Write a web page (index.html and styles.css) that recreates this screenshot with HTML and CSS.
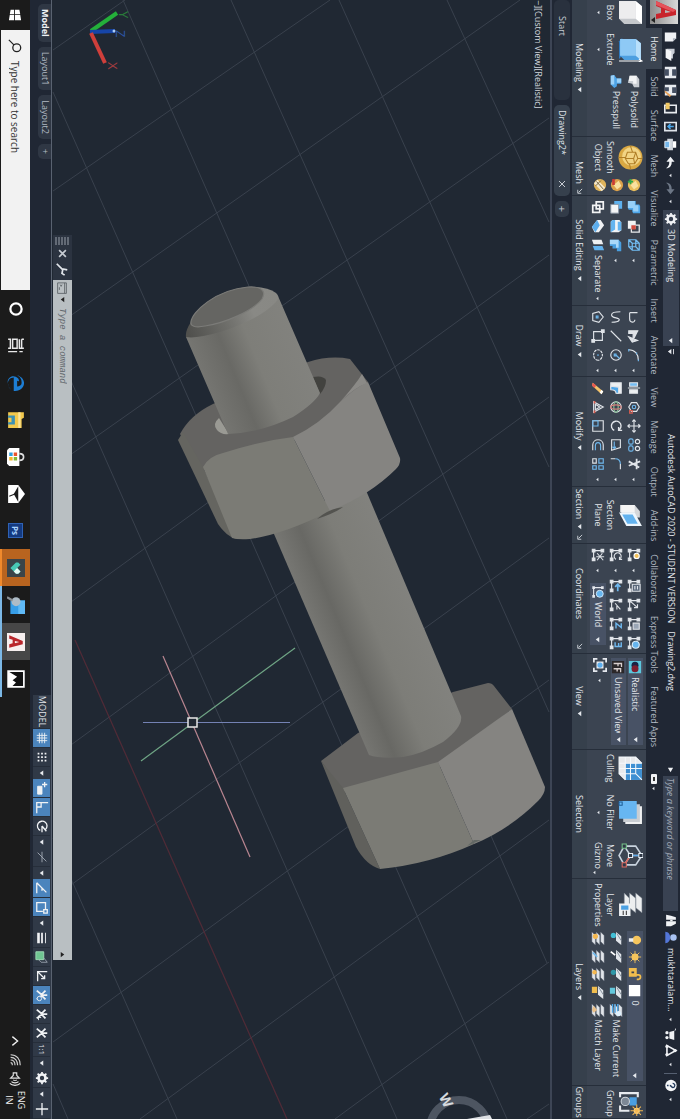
FILE: index.html
```html
<!DOCTYPE html>
<html lang="en">
<head>
    <meta charset="UTF-8">
    <meta name="viewport" content="width=device-width, initial-scale=1.0">
    <title>Autodesk AutoCAD 2020 - Drawing2.dwg</title>
    <link rel="stylesheet" href="styles.css">
</head>
<body>

<!-- shared symbols -->
<svg class="defs" aria-hidden="true">
    <symbol id="caret" viewBox="0 0 8 8"><path d="M1 2h6L4 6z" fill="#e6e9ee"/></symbol>
    <symbol id="dot" viewBox="0 0 8 8"><path d="M2 3h4L4 5.500z" fill="#e6e9ee"/></symbol>
    <symbol id="launch" viewBox="0 0 8 8"><path d="M1 1l4 4M6 2v4H2" stroke="#d5d9df" fill="none"/></symbol>
    <symbol id="ucs" viewBox="0 0 16 16"><path d="M3 3v10h10" stroke="#e6e9ee" stroke-width="1.300" fill="none"/><path d="M1.500 1.500h3v3h-3zM11.500 11.500h3v3h-3zM1.500 11.500h3v3h-3z" fill="#e6e9ee"/></symbol>
    <symbol id="stack" viewBox="0 0 16 16"><path d="M5 1h11l-4 4H1zM5 6h11l-4 4H1zM5 11h11l-4 4H1z" fill="#e1e5ea" stroke="#5b6572" stroke-width=".5"/></symbol>
    <symbol id="sheet" viewBox="0 0 16 16"><path d="M6 2h10l-5 6H1z" fill="#e1e5ea"/><path d="M3 7l8-5" stroke="#7c8794"/></symbol>
    <symbol id="gear" viewBox="0 0 16 16"><circle cx="8" cy="8" r="4" fill="none" stroke="#f0f2f5" stroke-width="3"/><path d="M8 1v3M8 12v3M1 8h3M12 8h3M3 3l2 2M11 11l2 2M13 3l-2 2M5 11l-2 2" stroke="#f0f2f5" stroke-width="2"/></symbol>
    <symbol id="person" viewBox="0 0 16 16"><path d="M8 8L3 14M8 8l5 6M8 9V2M8 9L3 4M8 9l5-5" stroke="#f0f2f5" stroke-width="2" fill="none"/></symbol>
</svg>

<div class="screen">
    <header class="header">
        <button class="app-button" aria-label="Application menu">
            <svg viewBox="0 0 24 28"><path d="M1 22L10 2h5l4 20h-5l-1-5H8l-2 5zM10 13h3l-1-6z" fill="#c8242c"/><path d="M1 22l9-20 2 3-7 17z" fill="#e5525a"/><path d="M17 23h6l-3 4z" fill="#222"/></svg>
        </button>
        <div class="titlebar">
            <div class="quick">
                <button aria-label="New"><svg viewBox="0 0 16 16"><path d="M3 1h7l4 4v10H3z" fill="#f0f2f5"/><path d="M10 1v4h4" fill="#aab1bb"/></svg></button>
                <button aria-label="Open"><svg viewBox="0 0 16 16"><path d="M1 13V3h5l2 2h5v2z" fill="#c9ced6"/><path d="M4 7h12l-4 7H1z" fill="#f4f5f7"/></svg></button>
                <button aria-label="Save"><svg viewBox="0 0 16 16"><path d="M1 1h14v14H1z" fill="#e8ebef"/><path d="M4 1h8v5H4zM4 10h8v5H4z" fill="#465063"/></svg></button>
                <button aria-label="Save as"><svg viewBox="0 0 16 16"><path d="M1 1h13v14H1z" fill="#e8ebef"/><path d="M4 1h7v5H4zM4 10h5v5H4z" fill="#465063"/><path d="M8 15l6-8 2 2-6 6z" fill="#e7a25a"/></svg></button>
                <button aria-label="Open from web"><svg viewBox="0 0 16 16"><path d="M4 1h9v14H4z" fill="none" stroke="#e8ebef" stroke-width="2"/><path d="M1 9h8v5H1z" fill="#f0c865"/></svg></button>
                <button aria-label="Save to web"><svg viewBox="0 0 16 16"><path d="M3 1h10v14H3z" fill="none" stroke="#dfe4ea" stroke-width="2"/><path d="M8 4v6M5 8l3 3 3-3" stroke="#4ba7ea" stroke-width="2" fill="none"/></svg></button>
                <button aria-label="Plot"><svg viewBox="0 0 16 16"><path d="M4 1h8v4H4z" fill="#fff"/><path d="M1 5h14v7H1z" fill="#cfd5dc"/><path d="M4 9h8v6H4z" fill="#74b6ea" stroke="#fff"/></svg></button>
                <button aria-label="Undo"><svg viewBox="0 0 16 16"><path d="M7 3L1 8l6 5V9.500c4 0 6 1 8 4 0-5-3-7-8-7z" fill="#f0f2f5"/></svg></button>
                <svg class="dot"><use href="#dot"/></svg>
                <button aria-label="Redo"><svg viewBox="0 0 16 16"><path d="M9 3l6 5-6 5V9.500c-4 0-6 1-8 4 0-5 3-7 8-7z" fill="#6c7685"/></svg></button>
                <svg class="dot"><use href="#dot"/></svg>
            </div>
            <div class="combo workspace">
                <svg><use href="#gear"/></svg>
                <select aria-label="Workspace"><option>3D Modeling</option></select>
                <svg class="caret"><use href="#caret"/></svg>
            </div>
            <svg class="caret more" viewBox="0 0 8 8"><path d="M1 0h6v1H1zM1 3h6L4 7z" fill="#e6e9ee"/></svg>
            <div class="title"><span>Autodesk AutoCAD 2020 - STUDENT VERSION</span><span>Drawing2.dwg</span></div>
            <svg class="caret" viewBox="0 0 8 8"><path d="M2 1l5 3-5 3z" fill="#f0f2f5"/></svg>
            <input class="search" type="text" aria-label="Search help" placeholder="Type a keyword or phrase">
            <div class="account">
                <svg viewBox="0 0 16 16"><path d="M2 8l2-6h3v12H1zM9 2h3l3 6v6H9z" fill="#f0f2f5"/><path d="M7 6h2v3H7z" fill="#f0f2f5"/></svg>
                <svg viewBox="0 0 16 16"><circle cx="8" cy="5" r="4" fill="#a9c2f2"/><path d="M1 15c0-8 14-8 14 0z" fill="#5376d8"/></svg>
                <button>mukhtaralam...</button>
                <svg class="dot"><use href="#dot"/></svg>
                <svg viewBox="0 0 16 16"><path d="M1 2h3l2 8h8l2-6H5" fill="#f0f2f5"/><circle cx="7" cy="13" r="2" fill="#f0f2f5"/><circle cx="13" cy="13" r="2" fill="#f0f2f5"/></svg>
                <svg viewBox="0 0 16 16"><path d="M8 2l6 11H2z" fill="none" stroke="#f0f2f5" stroke-width="2"/><circle cx="8" cy="3" r="2" fill="#f0f2f5"/><circle cx="3" cy="13" r="2" fill="#f0f2f5"/><circle cx="13" cy="13" r="2" fill="#f0f2f5"/></svg>
                <svg class="dot"><use href="#dot"/></svg>
                <i class="rule"></i>
                <svg viewBox="0 0 16 16"><circle cx="8" cy="8" r="7" fill="#f4f6f8"/><path d="M5.500 6c0-4 5-3 5-.5 0 2-2.500 2-2.500 4M8 11v2" stroke="#233a5c" stroke-width="1.600" fill="none"/></svg>
                <svg class="dot"><use href="#dot"/></svg>
            </div>
        </div>
        <nav class="tabs">
            <a href="#" class="active">Home</a><a href="#">Solid</a><a href="#">Surface</a><a href="#">Mesh</a><a href="#">Visualize</a><a href="#">Parametric</a><a href="#">Insert</a><a href="#">Annotate</a><a href="#">View</a><a href="#">Manage</a><a href="#">Output</a><a href="#">Add-ins</a><a href="#">Collaborate</a><a href="#">Express Tools</a><a href="#">Featured Apps</a>
            <button aria-label="Minimize ribbon"><svg viewBox="0 0 12 8"><rect x="1" y="1" width="10" height="6" rx="1" fill="#f0f2f5"/><path d="M4 4h4" stroke="#333" stroke-width="2"/></svg></button>
            <svg class="dot"><use href="#dot"/></svg>
        </nav>
    </header>

    <section class="ribbon">
        <div class="panel">
            <div class="tools modeling">
                <button class="big box"><svg viewBox="0 0 24 24"><path d="M1 7l5-6h17v17l-5 5H1z" fill="#c5c8cc"/><path d="M1 7h17v16H1z" fill="#ededee"/><path d="M1 7l5-6h17l-5 6z" fill="#fff"/></svg>Box<svg class="dot"><use href="#dot"/></svg></button>
                <button class="big"><svg viewBox="0 0 24 24"><path d="M1 20l3 3h17l-3-3z" fill="#2f7dc4"/><path d="M2 7l4-5h16v16l-4 4H2z" fill="#4d9fe0"/><path d="M2 7h16v15H2z" fill="#8ec9f5"/><path d="M2 7l4-5h16l-4 5z" fill="#b9e0fb"/><path d="M23 23V2M21 4l2-3 1 3" stroke="#fff" fill="none"/></svg>Extrude<svg class="dot"><use href="#dot"/></svg></button>
                <div class="list">
                    <button><svg viewBox="0 0 16 16"><path d="M2 5l4-3h9v6l-4 2-1 5-8-2z" fill="#c9cdd2"/><path d="M2 5h9v4H8v5l-6-1z" fill="#f3f4f5"/></svg>Polysolid</button>
                    <button><svg viewBox="0 0 16 16"><path d="M5 2h6v5h3l2 3-4 4H2l-1-4 4-3z" fill="#4da3e6"/><path d="M5 2h5v5H5zM1 10h11v4H2z" fill="#9bd1f8"/></svg>Presspull</button>
                </div>
            </div>
            <h2>Modeling <svg class="caret"><use href="#caret"/></svg></h2>
        </div>

        <div class="panel">
            <div class="tools">
                <button class="big"><svg viewBox="0 0 24 24"><circle cx="12" cy="12" r="11.500" fill="#d9a843"/><circle cx="11" cy="11" r="9" fill="#f2d484"/><path d="M7 7l6-2 5 3v6l-5 3-6-2zM7 7l6 2 5-1M13 9v8M1 12l6-2M13 5V1M18 13l5-1M12 17v6" stroke="#b07e26" fill="none"/></svg><span>Smooth<br>Object</span></button>
                <div class="list">
                    <button aria-label="Smooth more"><svg viewBox="0 0 16 16"><circle cx="8" cy="8" r="7" fill="#e8bd5c"/><path d="M3 6l6-3 4 5-5 4z" fill="#f8e1a0"/><path d="M4 9v6M1 12h6" stroke="#2da84c" stroke-width="2"/></svg></button>
                    <button aria-label="Smooth less"><svg viewBox="0 0 16 16"><circle cx="8" cy="8" r="7" fill="#dca14a"/><path d="M3 6l6-3 4 5-5 4z" fill="#f8e1a0"/><path d="M1 12h7" stroke="#cc3a35" stroke-width="3"/></svg></button>
                    <button aria-label="Refine mesh"><svg viewBox="0 0 16 16"><circle cx="8" cy="8" r="7" fill="#dfb45b"/><path d="M2 11l9-9 4 4-9 9z" fill="#f5e9cd"/><path d="M4 12l9-8M3 7l6 6" stroke="#6b5a34"/></svg></button>
                </div>
            </div>
            <h2 class="wide">Mesh <svg class="caret"><use href="#launch"/></svg></h2>
        </div>

        <div class="panel">
            <div class="tools solid">
                <div class="row">
                    <button aria-label="Union"><svg viewBox="0 0 16 16"><path d="M1 6h4V2l2-1h8v8l-2 1h-2v4l-2 1H1z" fill="#4ea7ea"/><path d="M1 7h5V3h7v6h-4v6H1z" fill="#97d0f8"/></svg></button>
                    <button aria-label="Subtract"><svg viewBox="0 0 16 16"><path d="M2 6h9v9H2z" fill="#f2f3f4"/><path d="M7 2h8v9H7z" fill="none" stroke="#e8eaed" stroke-width="1.500"/><path d="M7 6h5v5H7z" fill="#d34b3f"/></svg></button>
                    <button aria-label="Interfere"><svg viewBox="0 0 16 16"><path d="M2 6l4-4h8v8l-4 4H2zM2 6h8v8M10 6l4-4M6 2v8h8M6 10l-4 4" fill="none" stroke="#72bdf3" stroke-width="1.400"/></svg></button>
                    <svg class="dot"><use href="#dot"/></svg>
                </div>
                <div class="row">
                    <button aria-label="Intersect"><svg viewBox="0 0 16 16"><path d="M1 1h9v9H1z" fill="#5db1ef"/><path d="M5 5h10v9H5z" fill="#f5f6f7" stroke="#8793a3"/></svg></button>
                    <button aria-label="Slice"><svg viewBox="0 0 16 16"><path d="M1 4l3-2h9l2 3v9H3l-2-2z" fill="#f2f4f6"/><path d="M1 9h11l3 5H3l-2-2zM3 2h10v4H3z" fill="#64b4f0"/></svg></button>
                    <button aria-label="Thicken"><svg viewBox="0 0 16 16"><path d="M2 15V5l3-3h10v5h-3v5H9v3z" fill="#499fe0"/><path d="M2 5h9v3H7v7H2z" fill="#a9d9fa"/></svg></button>
                    <svg class="dot"><use href="#dot"/></svg>
                </div>
                <div class="row">
                    <button aria-label="Extract edges"><svg viewBox="0 0 16 16"><path d="M2 2h8v8H2zM6 6h8v8H6z" fill="none" stroke="#f2f3f4" stroke-width="2"/></svg></button>
                    <button aria-label="Offset face"><svg viewBox="0 0 16 16"><path d="M1 5l6-4 8 6v5l-6 3-8-6z" fill="#f0f2f4"/><path d="M1 9l6-3 8 5-6 4z" fill="#5cadec"/></svg></button>
                    <button><svg viewBox="0 0 16 16"><path d="M2 4l5-2v11l-5 2z" fill="#eef0f2"/><path d="M9 3l5-2v11l-5 2z" fill="#63b3ef"/></svg>Separate<svg class="dot"><use href="#dot"/></svg></button>
                </div>
            </div>
            <h2>Solid Editing <svg class="caret"><use href="#caret"/></svg></h2>
        </div>

        <div class="panel">
            <div class="tools line-icons">
                <div class="row">
                    <button aria-label="Polyline"><svg viewBox="0 0 16 16"><path d="M3 13V4M3 13h7c5 0 5-6 1-6"/></svg></button>
                    <button aria-label="Planar surface"><svg viewBox="0 0 16 16"><path d="M2 3v11h3V9h9M9 14l4-10 2 6z" fill="#dfe3e8"/></svg></button>
                    <button aria-label="Arc"><svg viewBox="0 0 16 16"><path d="M2 14C2 7 7 3 14 3"/><path class="hot" d="M1 14h3M13 3h2M5 5h2"/></svg></button>
                    <svg class="dot"><use href="#dot"/></svg>
                </div>
                <div class="row">
                    <button aria-label="Spline"><svg viewBox="0 0 16 16"><path d="M2 3c0 14 6 11 7 5s5-5 5 5"/></svg></button>
                    <button aria-label="Line"><svg viewBox="0 0 16 16"><path d="M2 14L14 2"/></svg></button>
                    <button aria-label="Circle"><svg viewBox="0 0 16 16"><circle cx="8" cy="8" r="6"/><path class="hot" d="M8 8l4-4M7 8h2v2H7z"/></svg></button>
                    <svg class="dot"><use href="#dot"/></svg>
                </div>
                <div class="row">
                    <button aria-label="Polygon"><svg viewBox="0 0 16 16"><path d="M8 2l6 5-2 7H4L2 7z"/><path class="hot" d="M7 8h2v2H7z"/></svg></button>
                    <button aria-label="Rectangle"><svg viewBox="0 0 16 16"><path d="M3 3h10v10H3z"/><path d="M1 1h3v3H1zM12 12h3v3h-3z" fill="#dfe3e8"/></svg></button>
                    <button aria-label="Ellipse"><svg viewBox="0 0 16 16"><ellipse cx="8" cy="8" rx="6" ry="5" stroke-dasharray="3 1"/><path class="hot" d="M7 8h2"/></svg></button>
                    <svg class="dot"><use href="#dot"/></svg>
                </div>
            </div>
            <h2>Draw <svg class="caret"><use href="#caret"/></svg></h2>
        </div>

        <div class="panel">
            <div class="tools line-icons modify">
                <div class="row">
                    <button aria-label="3D align"><svg viewBox="0 0 16 16"><path d="M2 4h4v9H2z" fill="#74bdf3"/><path d="M10 4h4v9h-4z" fill="#eef0f2"/><path d="M8 1v14"/></svg></button>
                    <button aria-label="3D move"><svg viewBox="0 0 16 16"><path d="M8 2l5 3v6l-5 3-5-3V5z"/><circle class="hot" cx="8" cy="8" r="2"/><path d="M12 10h3v3h-3z" stroke="#d65d50"/></svg></button>
                    <button aria-label="Move"><svg viewBox="0 0 16 16"><path d="M8 1v14M1 8h14M6 3l2-2 2 2M6 13l2 2 2-2M3 6L1 8l2 2M13 6l2 2-2 2"/></svg></button>
                    <button aria-label="Copy"><svg viewBox="0 0 16 16"><circle cx="4" cy="4" r="2.500"/><circle cx="12" cy="4" r="2.500"/><rect class="hot" x="1" y="9" width="6" height="5" rx="2"/><rect class="hot" x="9" y="9" width="6" height="5" rx="2"/></svg></button>
                    <button aria-label="Trim"><svg viewBox="0 0 16 16"><path d="M2 5h12M5 1l5 13M12 2L5 14" stroke-width="2"/></svg></button>
                    <svg class="dot"><use href="#dot"/></svg>
                </div>
                <div class="row">
                    <button aria-label="Fillet edge"><svg viewBox="0 0 16 16"><path d="M2 2h12v5c-5 0-6 3-6 7H2z" fill="#eef0f2"/><path d="M7 5h7v3c-3 0-4 2-4 6H6z" fill="#4fa6e8"/></svg></button>
                    <button aria-label="3D rotate"><svg viewBox="0 0 16 16"><circle cx="8" cy="8" r="6"/><ellipse cx="8" cy="8" rx="6" ry="2.500" stroke="#8ac59b"/><ellipse cx="8" cy="8" rx="2.500" ry="6" stroke="#d5817c"/></svg></button>
                    <button aria-label="Rotate"><svg viewBox="0 0 16 16"><path d="M13 10a5.500 5.500 0 1 1-1-6M13 1v4H9" stroke-width="1.600"/></svg></button>
                    <button aria-label="Stretch"><svg viewBox="0 0 16 16"><path d="M2 3h9l3 10H2z"/><path class="hot" d="M4 10h8M10 8l2 2-2 2"/></svg></button>
                    <button aria-label="Fillet"><svg viewBox="0 0 16 16"><path d="M2 14V9"/><path class="hot" d="M2 9c0-4 2-6 6-6"/><path d="M8 3h6"/></svg></button>
                    <svg class="dot"><use href="#dot"/></svg>
                </div>
                <div class="row">
                    <button aria-label="Erase"><svg viewBox="0 0 16 16"><path d="M2 14L12 2l3 2L5 15z" fill="#f4c36a" stroke="none"/><path d="M2 14l3-4 3 2-3 3z" fill="#e8584f" stroke="none"/><path d="M12 2l3 2-2 2-3-2z" fill="#fff" stroke="none"/></svg></button>
                    <button aria-label="3D scale"><svg viewBox="0 0 16 16"><path d="M8 2l6 11H2zM8 6l3 5H5z"/><path d="M1 12h3M12 12h3" stroke="#d65d50" stroke-width="2"/></svg></button>
                    <button aria-label="Scale"><svg viewBox="0 0 16 16"><path d="M2 2h12v12H2z"/><path class="hot" d="M2 8h6v6H2z"/></svg></button>
                    <button aria-label="Offset"><svg viewBox="0 0 16 16"><path d="M14 14H8C0 14 0 2 8 2h6"/><path class="hot" d="M14 11H9c-5 0-5-6 0-6h5"/></svg></button>
                    <button aria-label="Array"><svg viewBox="0 0 16 16"><path class="hot" d="M2 2h5v5H2zM10 2h4v5h-4zM10 10h4v4h-4z"/><path d="M2 10h5v4H2z"/></svg></button>
                    <svg class="dot"><use href="#dot"/></svg>
                </div>
            </div>
            <h2>Modify <svg class="caret"><use href="#caret"/></svg></h2>
        </div>

        <div class="panel">
            <div class="tools center">
                <button class="big"><svg viewBox="0 0 24 24"><path d="M2 8l6-5h6v13l-6 6H2z" fill="#d4d7da"/><path d="M2 8h7v13H2z" fill="#f5f5f5"/><path d="M9 8l13-7v15L9 23z" fill="#eef6fc"/><path d="M11 10l9-5v10l-9 5z" fill="#63b2ee"/></svg><span>Section<br>Plane</span></button>
            </div>
            <h2>Section <svg class="caret"><use href="#caret"/></svg><svg class="caret"><use href="#launch"/></svg></h2>
        </div>

        <div class="panel">
            <div class="tools line-icons">
                <div class="row coord">
                    <button aria-label="UCS"><svg viewBox="0 0 16 16"><use href="#ucs"/><circle cx="9" cy="5" r="3" fill="#f3c25b" stroke="#fff"/></svg></button><svg class="dot"><use href="#dot"/></svg>
                    <button aria-label="UCS named"><svg viewBox="0 0 16 16"><use href="#ucs"/><path d="M6 1h8v9H6zM8 4h4M8 7h4" fill="#59677a"/></svg></button>
                    <button aria-label="UCS origin"><svg viewBox="0 0 16 16"><use href="#ucs"/><path d="M3 13l8-9M7 4h4v4"/></svg></button>
                    <button aria-label="UCS face"><svg viewBox="0 0 16 16"><use href="#ucs"/><path d="M7 2h7v7H7z" fill="#9aa6b5"/></svg></button>
                    <button aria-label="UCS world"><svg viewBox="0 0 16 16"><use href="#ucs"/><circle cx="10" cy="6" r="4" fill="#66b5ef" stroke="#d8edfb"/></svg></button>
                </div>
                <div class="row coord">
                    <button aria-label="UCS previous"><svg viewBox="0 0 16 16"><use href="#ucs"/><path d="M13 8a4 4 0 1 1-1-5M13 1v3h-3"/></svg></button><svg class="dot"><use href="#dot"/></svg>
                    <button aria-label="UCS Z axis"><svg viewBox="0 0 16 16"><use href="#ucs"/><path class="hot" d="M14 6H6M9 3L6 6l3 3" stroke-width="2"/></svg></button>
                    <button aria-label="UCS 3 point"><svg viewBox="0 0 16 16"><use href="#ucs"/><path d="M6 9l7-6M9 7h4"/></svg></button>
                    <button aria-label="UCS Z"><svg viewBox="0 0 16 16"><use href="#ucs"/><path class="hot" d="M7 2h5L7 8h6" stroke-width="1.600"/></svg></button>
                    <button aria-label="UCS view"><svg viewBox="0 0 16 16"><use href="#ucs"/><path class="hot" d="M7 2h5v7H7M8 5h4" stroke-width="1.600"/></svg></button>
                </div>
                <div class="row coord">
                    <button aria-label="UCS icon"><svg viewBox="0 0 16 16"><use href="#ucs"/><path d="M6 3l8 6M14 2L6 9M10 1v9"/></svg></button><svg class="dot"><use href="#dot"/></svg>
                    <div class="combo">
                        <svg viewBox="0 0 16 16"><use href="#ucs"/><circle cx="10" cy="6" r="4" fill="#66b5ef" stroke="#d8edfb"/></svg>
                        <select aria-label="Coordinate system"><option>World</option></select>
                        <svg class="caret"><use href="#caret"/></svg>
                    </div>
                </div>
            </div>
            <h2 class="wide">Coordinates <svg class="caret"><use href="#launch"/></svg></h2>
        </div>

        <div class="panel">
            <div class="tools stacked">
                <div class="combo">
                    <svg viewBox="0 0 16 16"><path d="M1 1h14v14H1z" fill="#5cc7dd"/><circle cx="6" cy="8" r="4" fill="#1b2444"/><circle cx="10" cy="8" r="4" fill="#7c1f30"/></svg>
                    <select aria-label="Visual style"><option>Realistic</option></select>
                    <svg class="caret"><use href="#caret"/></svg>
                </div>
                <div class="combo">
                    <svg viewBox="0 0 16 16"><path d="M1 1h14v14H1z" fill="#2b2729"/><path d="M4 13V4h4M4 8h3M10 13V5h4M10 9h3" stroke="#d9cfcf" stroke-width="1.500" fill="none"/></svg>
                    <select aria-label="Saved view"><option>Unsaved View</option></select>
                    <svg class="caret"><use href="#caret"/></svg>
                </div>
                <div class="row">
                    <button aria-label="Viewport"><svg viewBox="0 0 16 16"><path d="M1 5V1h4M11 1h4v4M15 11v4h-4M5 15H1v-4" stroke="#e6e9ee" stroke-width="2" fill="none"/><path d="M4 4h8v8H4z" fill="#e6e9ee"/><circle cx="8" cy="8" r="3" fill="#5daeed"/></svg></button><svg class="dot"><use href="#dot"/></svg>
                </div>
            </div>
            <h2>View <svg class="caret"><use href="#caret"/></svg></h2>
        </div>

        <div class="panel">
            <div class="tools selection">
                <button class="big"><svg viewBox="0 0 24 24"><path d="M1 7l6-6h16v16l-6 6H1z" fill="#e8eaec"/><path d="M7 1h16v16H7z" fill="#3d8fd2"/><path d="M1 7h16v16H1zM1 7l6-6M17 7l6-6M17 23l6-6M7 1v22M12 1v22M1 12h22M1 17h22" stroke="#f4f8fb" fill="none"/></svg>Culling</button>
                <button class="big"><svg viewBox="0 0 24 24"><path d="M6 1h17v16H6z" fill="#f0f1f2"/><path d="M4 3h17v16H4z" fill="#c9cdd2"/><path d="M1 6h17v17H1z" fill="#67b6f2"/><path d="M2 20h3v3H2z" fill="none" stroke="#1e5d96"/></svg>No Filter<svg class="dot"><use href="#dot"/></svg></button>
                <button class="big"><svg viewBox="0 0 24 24"><path d="M12 1l9 6v11l-9 5-9-5V7zM12 12L3 18M12 12l9 6M12 12V1" fill="none" stroke="#c9d3de" stroke-width="1.500"/><path d="M12 12l9 6" stroke="#dd6a60" stroke-width="1.500"/><path d="M12 12V1" stroke="#5da9ea" stroke-width="1.500"/><path d="M1 16h4v4H1z" fill="#2f3846" stroke="#76c48a"/><path d="M19 16h4v4h-4z" fill="#2f3846" stroke="#dd6a60"/><path d="M10 0h4v4h-4zM10 10h4v4h-4z" fill="#2f3846" stroke="#e8f0f7"/></svg><span>Move<br>Gizmo</span></button>
                <svg class="dot end"><use href="#dot"/></svg>
            </div>
            <h2>Selection</h2>
        </div>

        <div class="panel">
            <div class="tools layers">
                <button class="big"><svg viewBox="0 0 24 24"><path d="M6 1h14l-5 6H1zM6 7h14l-5 6H1zM6 13h14l-5 5H1z" fill="#eceeef" stroke="#77818d" stroke-width=".5"/><path d="M11 12h12v11H11z" fill="#eef1f4"/><path d="M13 14h4v7h-4z" fill="#4ba1e3"/><path d="M18 16h4M18 19h4" stroke="#333"/></svg><span>Layer<br>Properties</span></button>
                <div class="layer-tools">
                    <div class="combo">
                        <svg viewBox="0 0 16 16"><circle cx="8" cy="6" r="5" fill="#f6c55d"/><path d="M6 10h4v5H6z" fill="#e9ecf0"/></svg>
                        <svg viewBox="0 0 16 16"><circle cx="8" cy="8" r="4" fill="#f6c55d"/><path d="M8 1v14M1 8h14M3 3l10 10M13 3L3 13" stroke="#f6c55d"/></svg>
                        <svg viewBox="0 0 16 16"><path d="M1 6h10v9H1z" fill="#f1bd4e"/><path d="M5 9h2v3H5z" fill="#3a4250"/><path d="M9 7V4c0-3 5-3 5 0v2" stroke="#f1bd4e" stroke-width="2" fill="none"/></svg>
                        <svg viewBox="0 0 16 16"><path d="M1 2h13v13H1z" fill="#fff"/></svg>
                        <select aria-label="Layer"><option>0</option></select>
                        <svg class="caret"><use href="#caret"/></svg>
                    </div>
                    <div class="row">
                        <button aria-label="Layer off"><svg viewBox="0 0 16 16"><use href="#sheet"/><circle cx="5" cy="11" r="3" fill="#43bfd6"/></svg></button>
                        <button aria-label="Layer isolate"><svg viewBox="0 0 16 16"><use href="#sheet"/><path d="M3 14l4-5" stroke="#fff" stroke-width="2"/></svg></button>
                        <button aria-label="Layer freeze"><svg viewBox="0 0 16 16"><use href="#sheet"/><circle cx="6" cy="11" r="3" fill="#2f97a8"/></svg></button>
                        <button aria-label="Layer lock"><svg viewBox="0 0 16 16"><use href="#sheet"/><path d="M3 9h7v6H3z" fill="#64c8dd"/></svg></button>
                        <button><svg viewBox="0 0 16 16"><use href="#stack"/><path d="M1 6h10M1 9h10M1 12h10" stroke="#4fa9ea" stroke-width="1.500"/><circle cx="12" cy="5" r="3" fill="#dff0fc"/></svg>Make Current</button>
                    </div>
                    <div class="row">
                        <button aria-label="All layers on"><svg viewBox="0 0 16 16"><use href="#stack"/><circle cx="6" cy="11" r="3" fill="#f4b851"/></svg></button>
                        <button aria-label="Unisolate"><svg viewBox="0 0 16 16"><use href="#stack"/><path d="M4 14l5-5" stroke="#6fb9ed" stroke-width="2"/></svg></button>
                        <button aria-label="Thaw all layers"><svg viewBox="0 0 16 16"><use href="#stack"/><circle cx="6" cy="12" r="2.500" fill="#f4b851"/></svg></button>
                        <button aria-label="Unlock layer"><svg viewBox="0 0 16 16"><use href="#sheet"/><path d="M2 9h7v6H2z" fill="#f1bd4e"/></svg></button>
                        <button><svg viewBox="0 0 16 16"><use href="#stack"/><path d="M3 13l5-4 3 4-3 2z" fill="#e9c08a"/></svg>Match Layer</button>
                    </div>
                </div>
            </div>
            <h2>Layers <svg class="caret"><use href="#caret"/></svg></h2>
        </div>

        <div class="panel">
            <div class="tools groups">
                <button class="big"><svg viewBox="0 0 24 24"><path d="M6 5H2v17h4M14 22h5v-9" fill="none" stroke="#e8ebef" stroke-width="2"/><path d="M6 6h8v7H6z" fill="#4b9fe2"/><circle cx="10" cy="17" r="4" fill="#7d8895" stroke="#cfd5dc"/><circle cx="19" cy="6" r="3" fill="#fbd98f"/><path d="M19 0v12M13 6h12M15 2l8 8M23 2l-8 8" stroke="#f4b851"/></svg>Group</button>
            </div>
            <h2>Groups</h2>
        </div>
    </section>

    <nav class="files">
        <a href="#">Start</a>
        <a href="#" class="current">Drawing2* <svg viewBox="0 0 8 8"><path d="M1 1l6 6M7 1L1 7" stroke="#c6cbd2" fill="none"/></svg></a>
        <button aria-label="New drawing">+</button>
    </nav>

    <main class="viewport">
        <svg class="model" viewBox="0 0 1119 498" preserveAspectRatio="xMinYMin slice">
            <defs>
                <linearGradient id="shaft" gradientUnits="userSpaceOnUse" x1="205" y1="385" x2="302" y2="345">
                    <stop offset="0" stop-color="#767672"/><stop offset=".3" stop-color="#696965"/><stop offset=".55" stop-color="#7e7e79"/><stop offset="1" stop-color="#82827e"/>
                </linearGradient>
                <linearGradient id="shaft2" gradientUnits="userSpaceOnUse" x1="318" y1="640" x2="414" y2="600">
                    <stop offset="0" stop-color="#777773"/><stop offset=".25" stop-color="#686864"/><stop offset=".55" stop-color="#7d7d78"/><stop offset="1" stop-color="#82827e"/>
                </linearGradient>
                <linearGradient id="rim" gradientUnits="userSpaceOnUse" x1="188" y1="333" x2="278" y2="296">
                    <stop offset="0" stop-color="#50504d"/><stop offset=".4" stop-color="#6e6e6a"/><stop offset=".7" stop-color="#898985"/><stop offset="1" stop-color="#888884"/>
                </linearGradient>
            </defs>
            <g transform="matrix(0 -1 1 0 0 550)">
                <g class="grid">
                    <path d="M53 92L507 1119M53 340L397 1119M123 0L547 963M231 0L549 712M339 0L549 467M447 0L549 222M53 838L177 1119M53 1084L68 1119"/>
                    <path d="M53 50L125 0M53 191L330 0M53 328L520 0M53 467L549 118M53 615L549 255M53 758L549 397M53 898L549 538M53 1042L549 680M140 1119L549 820M335 1119L549 962M527 1119L549 1104"/>
                </g>
                <path class="axis-line" d="M75 640L287 1119"/>

                <!-- bolt head -->
                <path fill="#646361" d="M321 761L358 733L453 692L488 683Q492 683 494 686L512 709L438 768L343 792z"/>
                <path fill="#60605c" d="M321 761L343 788L380 869Q366 865 356 847z"/>
                <path fill="#7b7b75" d="M343 788L438 762L474 844Q430 864 380 869z"/>
                <path fill="#858481" d="M438 762L512 709L545 787Q545 794 538 801Q510 829 474 844z"/>
                <path fill="#626865" d="M467 846L474 840L481 840z"/>
                <!-- shank -->
                <path fill="url(#shaft2)" d="M268 520L365 488L461 716Q463 727 443 742Q422 754 403 757Q380 759 369 755z"/>
                <!-- nut -->
                <path fill="#646361" d="M180 434Q190 415 213 404L308 362Q330 355 350 359L368 382L340 410L293 441L203 470z"/>
                <path fill="#656560" d="M178 440L183 432L203 467L236 539Q226 536 218 524z"/>
                <path fill="#7b7b75" d="M203 467Q209 456 223 453Q260 441 293 437L330 511Q285 534 250 539Q238 540 232 538z"/>
                <path fill="#858481" d="M293 437Q320 424 340 402Q356 387 368 382L400 458Q401 464 396 469Q370 495 330 511z"/>
                <path fill="#8b8a87" d="M340 402Q354 388 367 383L362 374Q356 384 340 402z"/>
                <path fill="#53534f" d="M317 519Q328 509 343 507Q335 513 317 519z"/>
                <path fill="#9a9a94" d="M219 418Q212 424 217 430Q221 435 229 434z"/>
                <path fill="#42423f" d="M313 377Q323 375 326 380Q326 387 320 394z"/>
                <!-- threaded end -->
                <path fill="url(#shaft)" d="M186 337Q240 325 278 296L320 393Q315 403 293 417Q260 433 228 434z"/>
                <path fill="url(#rim)" d="M186 337Q185 331 191 322L250 287Q268 287 276 293Q281 297 275 303Q258 320 220 332Q196 339 186 337z"/>
                <path fill="#656562" stroke="#7b7b78" stroke-width=".7" d="M191 322C192 312 215 290 248 287C263 286 266 292 262 299C253 311 225 323 205 326C195 328 190 326 191 322z"/>

                <!-- crosshair -->
                <path stroke="#b98691" d="M163 656L250 857"/>
                <path stroke="#6fa585" d="M295 648L141 761"/>
                <path stroke="#7482b4" d="M143 722.500H290"/>
                <rect x="188" y="718" width="9" height="9" fill="#202833" stroke="#e6e6e6" stroke-width="1.500"/>

                <!-- UCS icon -->
                <path stroke="#24b03a" stroke-width="4" d="M91 31L117 13"/>
                <path stroke="#1645a8" stroke-width="4" d="M90 32L115 31"/>
                <path stroke="#cf3f3b" stroke-width="4" d="M91 33L105 63"/>
                <circle cx="114" cy="31" r="1.500" fill="#a9cdf8"/>

                <!-- view cube -->
                <circle cx="459" cy="1129" r="29" fill="none" stroke="#4d5561" stroke-width="8"/>
                <path fill="#dde0e4" d="M467 1119L490 1115L492 1119z"/>
            </g>
            <text class="ucs-y" x="11" y="431">Y</text>
            <text class="ucs-z" x="30" y="434">Z</text>
            <text class="ucs-x" x="62" y="442">X</text>
            <text class="west" x="1101" y="105" text-anchor="middle" dominant-baseline="middle" transform="rotate(-28 1101 105)">W</text>
        </svg>
        <p class="view-label">&minus;][Custom View][Realistic]</p>
        <div class="command">
            <svg class="grip" viewBox="0 0 8 14"><path d="M1 0v14M3 0v14M5 0v14M7 0v14" stroke="#9ba2ab" stroke-dasharray="2 1"/></svg>
            <button aria-label="Close"><svg viewBox="0 0 8 8"><path d="M1 1l6 6M7 1L1 7" stroke="#c6cbd2" stroke-width="1.500"/></svg></button>
            <button aria-label="Customize"><svg viewBox="0 0 16 16"><path d="M2 14l7-7M9 2l-1 5 5 1 2-3" stroke="#e1e5ea" stroke-width="2" fill="none"/></svg></button>
            <div class="prompt">
                <svg viewBox="0 0 16 12"><path d="M1 1h12v10H1zM1 3h12M3 6l2 1-2 1M6 9h3" fill="none" stroke="#5c6267"/></svg>
                <svg class="caret dark" viewBox="0 0 8 8"><path d="M1 2h6L4 6z"/></svg>
                <input type="text" aria-label="Command" placeholder="Type a command">
                <svg class="caret dark" viewBox="0 0 8 8"><path d="M1 6h6L4 2z"/></svg>
            </div>
        </div>
    </main>

    <footer class="bottom">
        <nav class="layouts">
            <a href="#" class="current">Model</a><a href="#">Layout1</a><a href="#">Layout2</a><a href="#">+</a>
        </nav>
        <div class="status">
            <button class="text">MODEL</button>
            <button class="on" aria-label="Grid"><svg viewBox="0 0 16 16"><path d="M5 2v12M8 2v12M11 2v12M2 5h12M2 8h12M2 11h12"/></svg></button>
            <button aria-label="Snap"><svg viewBox="0 0 16 16"><path d="M3 4h11M3 8h11M3 12h11" stroke-width="2" stroke-dasharray="2 2"/></svg></button>
            <svg class="caret"><use href="#caret"/></svg>
            <button class="on" aria-label="Dynamic input"><svg viewBox="0 0 16 16"><path d="M4 2v6M1 5h6" stroke-width="1.500"/><path d="M6 8h9v5H6z" fill="#f0f2f5"/></svg></button>
            <button class="on" aria-label="Ortho"><svg viewBox="0 0 16 16"><path d="M3 1v13h12M3 9h5v5" stroke-width="1.500"/></svg></button>
            <button aria-label="Polar tracking"><svg viewBox="0 0 16 16"><path d="M12 4a5.500 5.500 0 1 0 1 6M8 8l6-5M8 8h7" stroke-width="1.500"/></svg></button>
            <svg class="caret"><use href="#caret"/></svg>
            <button aria-label="Isodraft"><svg viewBox="0 0 16 16"><path d="M2 8h12M3 13L13 3" stroke="#a5adb8"/></svg></button>
            <svg class="caret"><use href="#caret"/></svg>
            <button class="on" aria-label="Snap tracking"><svg viewBox="0 0 16 16"><path d="M2 14L13 3M2 14h12M8 8h3" stroke-width="1.500"/></svg></button>
            <button class="on" aria-label="Object snap"><svg viewBox="0 0 16 16"><path d="M11 4H3v10h10V7M11 2h4v4h-4z" stroke-width="1.500"/></svg></button>
            <svg class="caret"><use href="#caret"/></svg>
            <button aria-label="Lineweight"><svg viewBox="0 0 16 16"><path d="M2 4h12" /><path d="M2 8h12" stroke-width="2"/><path d="M2 12h12" stroke-width="3"/></svg></button>
            <button aria-label="Selection cycling"><svg viewBox="0 0 16 16"><path d="M2 6h9v9H2z" fill="#6fc592" stroke="#a2dfb9"/><path d="M9 6l5-4v7l-3 3" stroke="#9ca5b1"/></svg></button>
            <button aria-label="Dynamic UCS"><svg viewBox="0 0 16 16"><path d="M3 2v11h11M3 13l7-7M7 5h4v4" stroke-width="1.500"/></svg></button>
            <button class="on" aria-label="Annotation visibility"><svg viewBox="0 0 16 16"><use href="#person"/><circle cx="12" cy="11" r="2.500" fill="#4b84bd"/></svg></button>
            <button aria-label="Auto scale"><svg viewBox="0 0 16 16"><use href="#person"/><path d="M12 9v5M10 12h5"/></svg></button>
            <button aria-label="Annotation scale"><svg viewBox="0 0 16 16"><use href="#person"/></svg></button>
            <button class="scale">1:1</button>
            <svg class="caret"><use href="#caret"/></svg>
            <button aria-label="Workspace switching"><svg><use href="#gear"/></svg></button>
            <svg class="caret"><use href="#caret"/></svg>
            <button aria-label="Annotation monitor"><svg viewBox="0 0 16 16"><path d="M8 1v14M1 8h14" stroke-width="1.500"/></svg></button>
        </div>
    </footer>

    <div class="taskbar">
        <button class="start" aria-label="Start"><svg viewBox="0 0 16 16"><path d="M2 3l5-1v6H2zM8 2l6-1v7H8zM2 9h5v5l-5-1zM8 9h6v6l-6-1z" fill="#fff"/></svg></button>
        <label class="find">
            <svg viewBox="0 0 16 16"><circle cx="10" cy="6" r="4.500" fill="none" stroke="#222" stroke-width="1.500"/><path d="M7 9l-6 6" stroke="#222" stroke-width="1.500"/></svg>
            <input type="text" placeholder="Type here to search" aria-label="Search">
        </label>
        <div class="apps">
            <button aria-label="Cortana"><svg viewBox="0 0 16 16"><circle cx="8" cy="8" r="5" fill="none" stroke="#fff" stroke-width="2"/></svg></button>
            <button aria-label="Task view"><svg viewBox="0 0 16 16"><path d="M2 3V1M10 3V1M2 3h8v2H2M2 7h8v4H2zM2 15v-2h8v2M13 2v3M13 7v8" fill="none" stroke="#e9e9e9" stroke-width="1.300"/></svg></button>
            <button aria-label="Edge"><svg viewBox="0 0 16 16"><path d="M14 12c-3 5-11 4-11-2h12C16 0 4-3 1 7c2-4 5-4 7-4 2 0 3 2 3 4H6c1-2 0-2-2-1-5 5 0 11 5 9 2 0 4-1 5-3z" fill="#1d7ed4"/></svg></button>
            <button aria-label="Explorer"><svg viewBox="0 0 16 16"><path d="M1 1h5l1 2h8v12H1z" fill="#f2c84d"/><path d="M1 4h14v2H1z" fill="#fbe49a"/><path d="M4 15V9h8v6h-2v-3H6v3z" fill="#3a90b5"/></svg></button>
            <button aria-label="Store"><svg viewBox="0 0 16 16"><path d="M0 5h16v9l-2 2H2l-2-2z" fill="#fff"/><path d="M5 5c0-5 6-5 6 0" fill="none" stroke="#ddd" stroke-width="1.500"/><path d="M4 7h3v3H4z" fill="#e8542f"/><path d="M8 7h3v3H8z" fill="#83b735"/><path d="M4 11h3v3H4z" fill="#2b9fe0"/><path d="M8 11h3v3H8z" fill="#f2b52c"/></svg></button>
            <button aria-label="Mail"><svg viewBox="0 0 16 16"><path d="M0 6l8-6 8 6v9H0z" fill="#fff"/><path d="M1 6h14l-7 4z" fill="#1c1c1c"/><path d="M8 9l2 5" stroke="#1c1c1c"/></svg></button>
            <button class="ps">Ps</button>
            <button class="orange" aria-label="Filmora"><svg viewBox="0 0 16 16"><path d="M0 0h16v16H0z" fill="#3a4449"/><path d="M3 6l2-2 3 3 3-3 2 2v2l-5 5-5-5z" fill="#48c9b5"/><path d="M11 4l2 2v2l-2 2-3-3z" fill="#e3faf5"/></svg></button>
            <button class="open" aria-label="Magnifier"><svg viewBox="0 0 16 16"><path d="M4 0h12v13H4z" fill="#379ee8"/><path d="M4 0h12v6H4z" fill="#5fb9f5"/><circle cx="5" cy="8" r="4" fill="#aebcc7"/><path d="M4 11l-3 5" stroke="#8b8f93" stroke-width="2"/></svg></button>
            <button class="open focus" aria-label="AutoCAD"><svg viewBox="0 0 16 16"><path d="M0 0h16v16H0z" fill="#f7efee"/><path d="M2 14L7 2h3l3 12h-3l-1-3H6l-1 3zM7 9h2L8 5z" fill="#b9262b"/></svg></button>
            <button class="open" aria-label="Photos"><svg viewBox="0 0 16 16"><path d="M1 1h14v14H1z" fill="#111" stroke="#fff" stroke-width="1.500"/><path d="M1 15l5-8 3 4 2-3 4 4v3z" fill="#fff"/></svg></button>
        </div>
        <div class="tray">
            <svg viewBox="0 0 16 16"><path d="M3 11l5-6 5 6" stroke="#f2f2f2" stroke-width="1.500" fill="none"/></svg>
            <svg viewBox="0 0 16 16"><path d="M2 13C2 6 7 2 14 2M5 13c0-5 4-8 9-8M8 13c0-3 2-5 6-5M11 13c0-1 1-2 3-2" stroke="#cfcfcf" stroke-width="1.300" fill="none"/></svg>
            <svg viewBox="0 0 16 16"><path d="M1 6h3l3-3v10l-3-3H1z" fill="none" stroke="#e4e4e4" stroke-width="1.300"/><path d="M9 6c1 1 1 3 0 4M11 4c2 2 2 6 0 8M13 2c3 3 3 9 0 12" stroke="#e4e4e4" stroke-width="1.300" fill="none"/></svg>
            <span class="lang">ENG<br>IN</span>
        </div>
    </div>
</div>
</body>
</html>
```
FILE: styles.css
```css
* {
    box-sizing: border-box;
}
html {
    overflow: hidden;
}
body {
    position: relative;
    margin: 0;
    height: 100vh;
    overflow: hidden;
    background: #202833;
    font-family: "Open Sans", "Noto Sans", sans-serif;
    font-size: 9px;
    line-height: 12px;
    color: #e3e6eb;
}
.defs {
    position: absolute;
    width: 0;
    height: 0;
}

/* the desktop is laid out landscape and turned a quarter clockwise */
.screen {
    width: 100vh;
    height: 100vw;
    transform: translateX(100vw) rotate(90deg);
    transform-origin: 0 0;
    display: grid;
    grid-template-columns: minmax(0, 1fr);
    grid-template-rows: auto auto auto minmax(0, 1fr) auto auto;
    overflow: hidden;
}
button, input, select {
    font: inherit;
    color: inherit;
    background: none;
    border: 0;
    padding: 0;
    margin: 0;
    border-radius: 0;
    appearance: none;
    outline: 0;
    white-space: nowrap;
}
input {
    min-width: 0;
}
a {
    color: inherit;
    text-decoration: none;
    white-space: nowrap;
}
svg {
    display: block;
    flex: none;
    width: 14px;
    height: 14px;
}
svg.caret {
    width: 7px;
    height: 7px;
}
svg.dot {
    width: 7px;
    height: 7px;
}
svg.dark {
    fill: #222;
}

/* title bar and ribbon tabs */
.header {
    display: grid;
    grid-template-columns: 28px minmax(0, 1fr);
    grid-template-rows: 18px 16px;
    background: #202734;
}
.app-button {
    grid-row: 1 / 3;
    width: 24px;
    height: 28px;
    margin-top: 2px;
    background: linear-gradient(#d8d8d8, #8c8c8c);
}
.app-button svg {
    width: 24px;
    height: 28px;
}
.titlebar {
    display: flex;
    align-items: center;
    min-width: 0;
}
.quick {
    display: flex;
    align-items: center;
    gap: 5px;
    width: 182px;
    padding-left: 2px;
}
.quick svg {
    width: 13px;
    height: 13px;
}
.quick .dot {
    width: 7px;
    margin: 0 -2px;
}
.combo {
    display: flex;
    align-items: center;
    gap: 3px;
    height: 16px;
    padding: 0 2px;
    background: #485265;
}
.combo select {
    flex: 1;
    min-width: 0;
    height: 14px;
    line-height: 14px;
}
.workspace {
    width: 136px;
    background: #394252;
}
.more {
    margin-left: 2px;
}
.title {
    flex: 1;
    display: flex;
    justify-content: center;
    gap: 8px;
    padding-left: 4px;
    white-space: nowrap;
}
.search {
    width: 135px;
    height: 15px;
    margin: 0 3px 0 3px;
    padding: 0 2px;
    background: #394252;
    font-style: italic;
}
.search::placeholder {
    color: #a5adba;
}
.account {
    display: flex;
    align-items: center;
    gap: 4px;
    width: 205px;
}
.account > svg:not(.dot) {
    width: 13px;
}
.rule {
    width: 1px;
    height: 13px;
    margin: 0 1px;
    background: #566071;
}
.tabs {
    display: flex;
    align-items: center;
    color: #b2b9c3;
}
.tabs a {
    padding: 2px 6px 2px 7px;
}
.tabs .active {
    padding: 2px 8px;
    background: #3b4451;
    color: #e6e9ee;
}
.tabs button {
    margin-left: 20px;
}
.tabs button svg {
    width: 12px;
    height: 8px;
}

/* ribbon */
.ribbon {
    display: grid;
    grid-template-columns: 137fr 59fr 110fr 71fr 110fr 57fr 110fr 96fr 129fr 207fr 33fr;
    height: 74px;
    background: #3b4451;
}
.panel {
    display: flex;
    flex-direction: column;
    justify-content: space-between;
    min-width: 0;
    overflow: hidden;
    border-right: 1px solid #262e3a;
    white-space: nowrap;
}
.panel h2 {
    display: flex;
    justify-content: center;
    align-items: center;
    gap: 4px;
    margin: 0;
    height: 15px;
    background: #36404c;
    font-size: 9px;
    font-weight: 400;
}
.panel h2.wide {
    justify-content: space-between;
    padding: 0 3px 0 24px;
}
.tools {
    display: flex;
    gap: 4px;
    padding: 3px 4px;
    height: 58px;
}
.tools button {
    display: flex;
    align-items: center;
    gap: 3px;
    height: 18px;
}
.tools .big {
    flex-direction: column;
    gap: 2px;
    height: 54px;
    line-height: 12px;
    text-align: center;
}
.big > svg:first-child {
    width: 25px;
    height: 25px;
}
.modeling {
    gap: 8px;
    padding-left: 0;
}
.box {
    width: 25px;
}
.list {
    display: flex;
    flex-direction: column;
}
.row {
    display: flex;
    align-items: center;
    gap: 5px;
    height: 18px;
}
.solid, .line-icons, .stacked {
    flex-direction: column;
    gap: 0;
}
.modify .row {
    gap: 5px;
}
.coord {
    justify-content: space-between;
    padding-right: 4px;
}
.coord .combo {
    flex: 1;
    margin-left: 4px;
}
.center {
    justify-content: center;
}
.stacked .combo {
    margin-bottom: 2px;
}
.selection {
    gap: 12px;
}
.end {
    align-self: flex-end;
    margin-left: -12px;
}
.layer-tools {
    flex: 1;
}
.layer-tools .combo {
    margin-bottom: 2px;
}
.layer-tools .row {
    gap: 4px;
}
.line-icons button > svg {
    fill: none;
    stroke: #dfe3e8;
    stroke-width: 1.3;
}
.line-icons svg.dot {
    stroke: none;
}
.hot {
    stroke: #6fb8ee;
}

/* drawing file tabs */
.files {
    display: flex;
    align-items: center;
    gap: 5px;
    height: 22px;
    padding: 2px 0;
    border-bottom: 2px solid #3d4555;
    background: #202734;
    color: #c3c9d1;
}
.files a {
    display: flex;
    justify-content: space-between;
    align-items: center;
    width: 100px;
    height: 16px;
    padding-left: 16px;
    border-radius: 5px;
    background: #29313e;
}
.files .current {
    width: 91px;
    padding: 0 8px 0 5px;
    background: #36404d;
    color: #dfe3e8;
}
.files svg {
    width: 8px;
    height: 8px;
}
.files button {
    width: 16px;
    height: 14px;
    border-radius: 5px;
    background: #323b48;
    font-size: 11px;
}

/* model space */
.viewport {
    position: relative;
    background: #202833;
    overflow: hidden;
}
.model {
    width: 100%;
    height: 100%;
}
.model path {
    stroke-width: 1.2;
}
.model path[stroke-width="4"] {
    stroke-width: 4;
}
.grid {
    stroke: #39414d;
    fill: none;
}
.model .grid path {
    stroke-width: 1;
}
.axis-line {
    stroke: #512b37;
}
.model text {
    font-size: 13px;
}
.ucs-y {
    fill: #2a7a3a;
}
.ucs-z {
    fill: #2c56a8;
}
.ucs-x {
    fill: #a03c40;
}
.model .west {
    font-size: 14px;
    font-weight: 700;
    fill: #d5d9de;
}
.view-label {
    position: absolute;
    top: 6px;
    left: 0;
    margin: 0;
    color: #d2d7dd;
}
.command {
    position: absolute;
    bottom: 1px;
    left: 21%;
    right: 14.2%;
    display: flex;
    align-items: center;
    gap: 4px;
    height: 19px;
    background: #2b3340;
}
.command .grip {
    width: 8px;
    margin-left: 2px;
}
.command button svg {
    width: 9px;
    height: 9px;
}
.command button:nth-of-type(2) svg {
    width: 14px;
    height: 14px;
}
.prompt {
    flex: 1;
    display: flex;
    align-items: center;
    height: 19px;
    padding: 0 2px;
    background: #b9bfc2;
}
.prompt input {
    flex: 1;
    font: italic 9px/12px "Liberation Mono", monospace;
    padding-left: 5px;
}
.prompt input::placeholder {
    color: #62686d;
}

/* layout tabs and status bar */
.bottom {
    display: flex;
    justify-content: space-between;
    align-items: flex-start;
    height: 22px;
    border-top: 1px solid #596270;
    background: #202734;
}
.layouts {
    display: flex;
    gap: 5px;
    padding-left: 4px;
}
.layouts a {
    height: 13px;
    padding: 0 5px;
    border-radius: 0 0 5px 5px;
    background: #2f3744;
    color: #b2b9c3;
}
.layouts .current {
    font-weight: 700;
    color: #f0f2f5;
}
.status {
    display: flex;
    align-items: center;
    height: 18px;
    background: #303947;
}
.status button {
    display: flex;
    justify-content: center;
    align-items: center;
    width: 19px;
    height: 17px;
    border-right: 1px solid #262e3a;
}
.status .text {
    width: 34px;
}
.status .scale {
    width: 14px;
    font-size: 8px;
}
.status .on {
    background: #4b84bd;
}
.status svg {
    fill: none;
    stroke: #f0f2f5;
}
.status svg.caret {
    width: 12px;
    stroke: none;
}

/* windows taskbar */
.taskbar {
    display: flex;
    height: 30px;
    background: #1b1b1b;
    color: #f2f2f2;
}
.taskbar button {
    display: flex;
    justify-content: center;
    align-items: center;
}
.start {
    width: 30px;
}
.find {
    display: flex;
    align-items: center;
    gap: 8px;
    width: 260px;
    height: 29px;
    padding-left: 9px;
    background: #f2f2f2;
}
.find input {
    font-size: 10px;
    flex: 1;
}
.find input::placeholder {
    color: #333;
}
.apps {
    display: flex;
}
.apps button {
    width: 37px;
    border-bottom: 2px solid transparent;
}
.apps svg {
    width: 18px;
    height: 18px;
}
.apps .ps {
    width: 15px;
    height: 15px;
    margin: 7px 11px;
    border: 1px solid #2f62b5;
    background: #143a80;
    font-size: 8px;
    font-weight: 700;
    color: #a9d3ff;
}
.apps .orange {
    background: #b8641f;
    border-color: #f08a2c;
}
.apps .open {
    border-color: #7cb8e6;
}
.apps .focus {
    background: #474747;
}
.tray {
    display: flex;
    align-items: center;
    gap: 5px;
    margin-left: auto;
    padding-right: 10px;
}
.lang {
    text-align: center;
}
```
